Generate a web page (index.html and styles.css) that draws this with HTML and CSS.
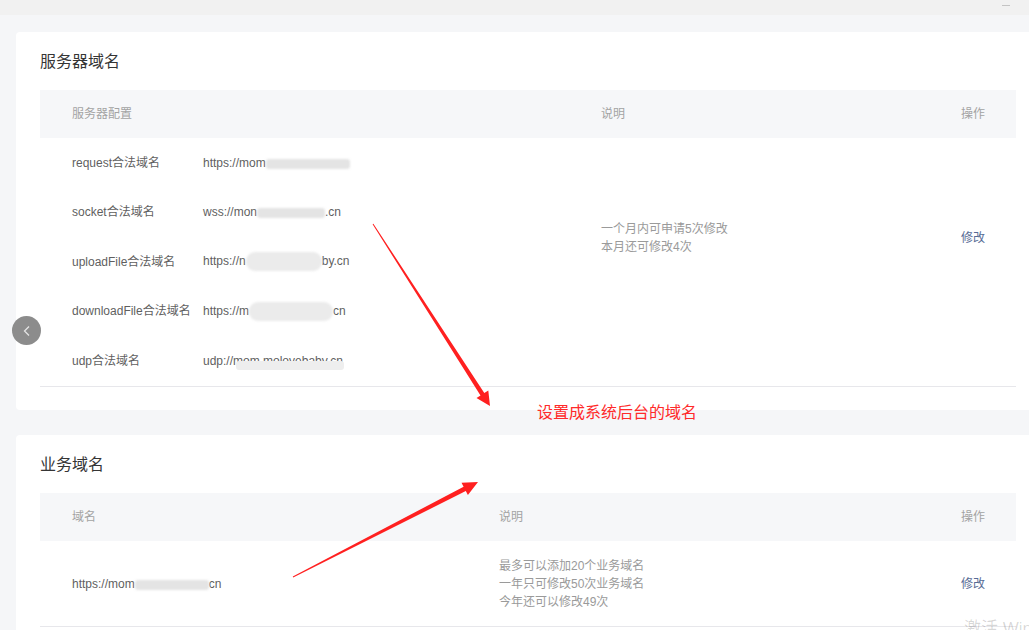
FILE: index.html
```html
<!DOCTYPE html>
<html>
<head>
  <meta charset="utf-8">
  <title>开发设置 - 服务器域名</title>
  <link rel="stylesheet" href="styles.css">
</head>
<body>
  <div class="topbar"><span class="min-dash"></span></div>

  <div class="main">
    <div class="card">
      <h3 class="card-title">服务器域名</h3>
      <div class="table">
        <div class="thead cols-server">
          <div>服务器配置</div>
          <div>说明</div>
          <div>操作</div>
        </div>
        <div class="tbody cols-server">
          <div class="server-list">
            <div class="item">
              <span class="label">request合法域名</span>
              <span class="value">https://mom<span class="mask mask-1"></span></span>
            </div>
            <div class="item">
              <span class="label">socket合法域名</span>
              <span class="value">wss://mon<span class="mask mask-2"></span>.cn</span>
            </div>
            <div class="item">
              <span class="label">uploadFile合法域名</span>
              <span class="value">https://n<span class="mask mask-3 tall"></span>by.cn</span>
            </div>
            <div class="item">
              <span class="label">downloadFile合法域名</span>
              <span class="value">https://m<span class="mask mask-4 tall"></span>cn</span>
            </div>
            <div class="item">
              <span class="label">udp合法域名</span>
              <span class="value udp">udp://mom.molovebaby.cn<span class="mask mask-5"></span></span>
            </div>
          </div>
          <div class="desc shifted">
            一个月内可申请5次修改<br>
            本月还可修改4次
          </div>
          <div class="shifted"><a class="link" href="#">修改</a></div>
        </div>
      </div>
    </div>

    <div class="card">
      <h3 class="card-title">业务域名</h3>
      <div class="table">
        <div class="thead cols-biz">
          <div>域名</div>
          <div>说明</div>
          <div>操作</div>
        </div>
        <div class="tbody cols-biz biz-row">
          <div class="value">https://mom<span class="mask mask-6"></span>cn</div>
          <div class="desc">
            最多可以添加20个业务域名<br>
            一年只可修改50次业务域名<br>
            今年还可以修改49次
          </div>
          <div><a class="link" href="#">修改</a></div>
        </div>
      </div>
    </div>
  </div>

  <button class="side-btn" type="button">
    <svg width="10" height="14" viewBox="0 0 10 14"><polyline points="7,2.5 2.5,7 7,11.5" fill="none" stroke="#e4e4e4" stroke-width="1.3"/></svg>
  </button>

  <svg class="marks" width="1029" height="630" viewBox="0 0 1029 630">
    <polygon fill="#ff2020" points="373.4,223.7 484.3,393 488.3,390.4 490,406 476.5,398 480.5,395.4 372.6,224.3"/>
    <polygon fill="#ff2020" points="293.2,577.4 465.8,491.1 467.9,495.1 478,482 461.5,482.7 463.6,486.7 292.8,576.6"/>
  </svg>
  <div class="note">设置成系统后台的域名</div>
  <div class="watermark">激活 Windows</div>
</body>
</html>
```

FILE: styles.css
```css
body {
    margin: 0;
    background-color: #f5f6f8;
    font-family: "Liberation Sans", "Noto Sans CJK SC", sans-serif;
    color: #5f5f5f;
    overflow: hidden;
    height: 630px;
    position: relative;
}
.topbar {
    height: 15px;
    background-color: #f1f1f1;
    position: relative;
}
.min-dash {
    position: absolute;
    left: 1002px;
    top: 5px;
    width: 8px;
    height: 1px;
    background-color: #c4c4c4;
}
.main {
    padding: 17px 0 0 16px;
    width: 1024px;
}
.card {
    background-color: #fff;
    border-radius: 4px;
    padding: 18px 24px 23px;
    margin-bottom: 25px;
}
.card-title {
    margin: 0 0 17px;
    padding-top: 1px;
    font-size: 16px;
    line-height: 22px;
    font-weight: normal;
    color: #353535;
}
.thead {
    height: 48px;
    align-items: center;
    background-color: #f6f7f9;
    color: #a3a3a3;
    font-size: 12px;
    line-height: 16px;
}
.thead,
.tbody {
    display: grid;
    padding-left: 32px;
}
.cols-server {
    grid-template-columns: 529px 360px 1fr;
}
.cols-biz {
    grid-template-columns: 427px 462px 1fr;
}
.tbody {
    border-bottom: 1px solid #e7e7eb;
    font-size: 12px;
    line-height: 18px;
    align-items: center;
}
.item {
    display: flex;
    align-items: center;
    height: 49.5px;
}
.label {
    width: 131px;
    flex-shrink: 0;
}
.value {
    white-space: nowrap;
    position: relative;
}
.mask {
    display: inline-block;
    height: 10px;
    vertical-align: middle;
    background-color: #e4e4e4;
    border-radius: 3px;
    filter: blur(1px);
}
.mask.tall {
    height: 19px;
    border-radius: 9px;
    background-color: #ebebeb;
}
.mask-1 { width: 84px; }
.mask-2 { width: 68px; }
.mask-3 { width: 76px; }
.mask-4 { width: 84px; }
.mask-6 { width: 74px; }
.mask-5 {
    position: absolute;
    left: 33px;
    top: 9px;
    width: 108px;
    height: 9px;
    background-color: #eeeeee;
    filter: blur(0.6px);
}
.desc {
    color: #9a9a9a;
}
.shifted {
    margin-bottom: 48px;
}
.biz-row {
    height: 85px;
}
.biz-row > div {
    margin-top: 2px;
}
.link {
    color: #576b95;
    text-decoration: none;
}
.side-btn {
    position: absolute;
    left: 12px;
    top: 316px;
    width: 29px;
    height: 29px;
    border: none;
    border-radius: 50%;
    background-color: #8c8c8c;
    padding: 0;
    display: flex;
    align-items: center;
    justify-content: center;
}
.marks {
    position: absolute;
    left: 0;
    top: 0;
    pointer-events: none;
}
.note {
    position: absolute;
    left: 537px;
    top: 402px;
    font-size: 16px;
    line-height: 22px;
    color: #ff2a2a;
}
.watermark {
    position: absolute;
    left: 964px;
    top: 614px;
    font-size: 17px;
    color: rgba(0, 0, 0, 0.16);
    white-space: nowrap;
}
```
